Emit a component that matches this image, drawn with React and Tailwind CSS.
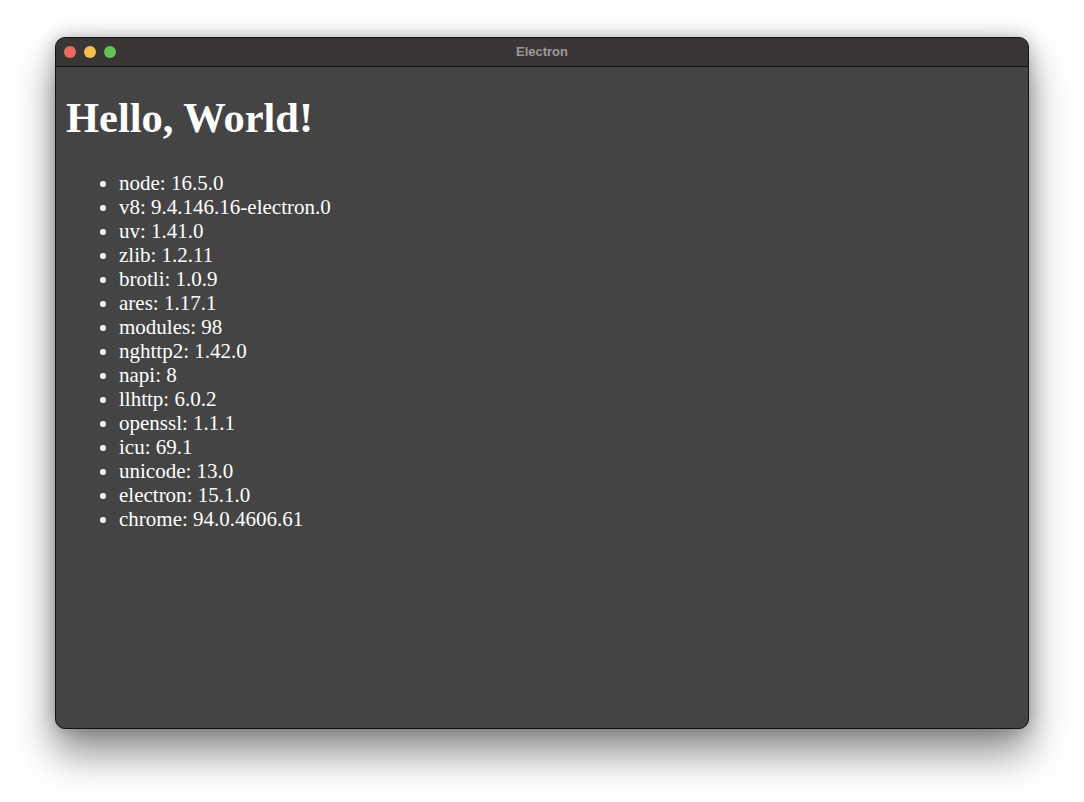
import React from 'react';

const versions = [
  ['node', '16.5.0'],
  ['v8', '9.4.146.16-electron.0'],
  ['uv', '1.41.0'],
  ['zlib', '1.2.11'],
  ['brotli', '1.0.9'],
  ['ares', '1.17.1'],
  ['modules', '98'],
  ['nghttp2', '1.42.0'],
  ['napi', '8'],
  ['llhttp', '6.0.2'],
  ['openssl', '1.1.1'],
  ['icu', '69.1'],
  ['unicode', '13.0'],
  ['electron', '15.1.0'],
  ['chrome', '94.0.4606.61'],
];

const App = () => {
  return (
    <div className="w-[1084px] h-[802px] bg-white overflow-hidden pt-[37px] pl-[55px]">
      <div className="w-[974px] h-[692px] rounded-[10px] border border-[#111] bg-[#444444] overflow-hidden flex flex-col shadow-[0_24px_40px_rgba(0,0,0,0.45),0_0_18px_rgba(0,0,0,0.25)]">
        {/* title bar */}
        <div className="relative h-[29px] shrink-0 bg-[#3b3636] border-b border-[#111] flex items-center px-[8px] gap-[8px]">
          <span className="w-[12px] h-[12px] rounded-full bg-[#ec6a5e]" />
          <span className="w-[12px] h-[12px] rounded-full bg-[#f4bf4f]" />
          <span className="w-[12px] h-[12px] rounded-full bg-[#61c554]" />
          <div className="absolute inset-0 flex items-center justify-center text-[13px] font-bold text-[#9d9999] font-['Liberation_Sans',Arial,sans-serif]">
            Electron
          </div>
        </div>

        {/* content */}
        <div className="flex-1 px-[10px] text-white font-['Liberation_Serif','Times_New_Roman',serif]">
          <h1 className="mt-[27px] mb-[29px] text-[42.5px] font-bold leading-[48px]">Hello, World!</h1>
          <ul className="list-disc pl-[53px] text-[21px] leading-[24px]">
            {versions.map(([name, v]) => (
              <li key={name}>{name}: {v}</li>
            ))}
          </ul>
        </div>
      </div>
    </div>
  );
};

export default App;
